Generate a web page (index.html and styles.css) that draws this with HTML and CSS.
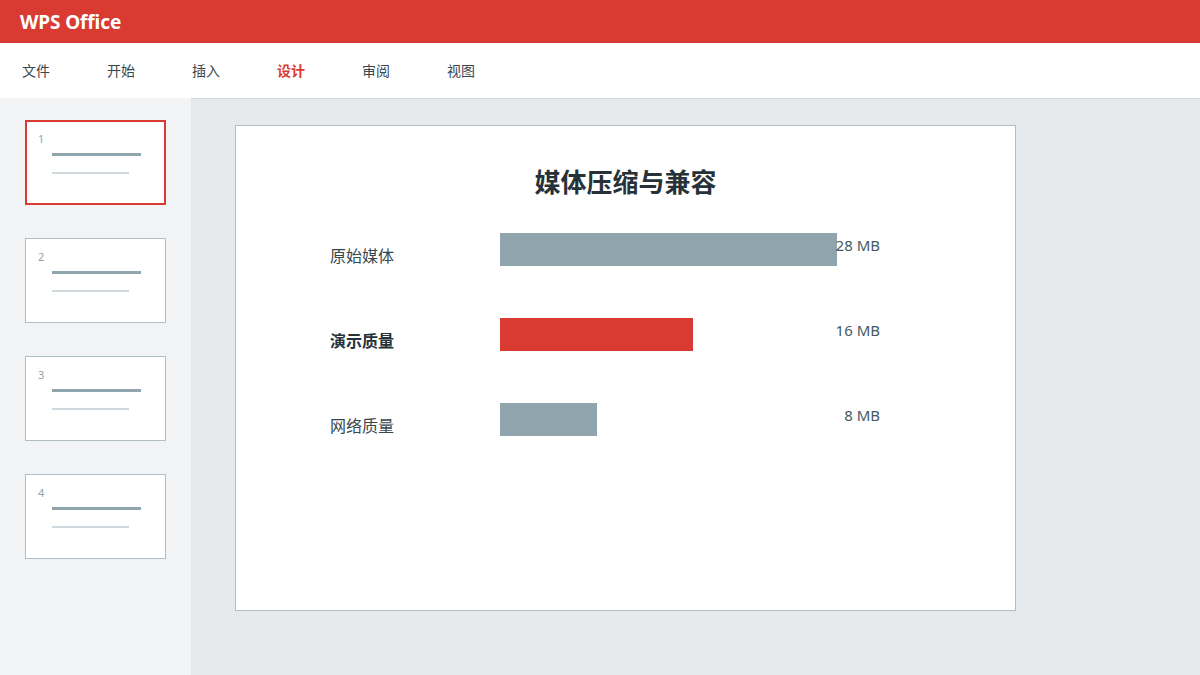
FILE: index.html
```html
<!DOCTYPE html>
<html lang="zh-CN">

<head>
      <meta charset="UTF-8">
      <meta name="viewport" content="width=device-width, initial-scale=1.0">
      <title>WPS Office</title>
      <link rel="stylesheet" href="styles.css">
</head>

<body>
      <div class="app">
            <!-- title bar -->
            <header class="titlebar">
                  <h1 class="brand">WPS Office</h1>
            </header>

            <!-- ribbon tabs -->
            <nav class="tabs">
                  <span class="tab">文件</span>
                  <span class="tab">开始</span>
                  <span class="tab">插入</span>
                  <span class="tab active">设计</span>
                  <span class="tab">审阅</span>
                  <span class="tab">视图</span>
            </nav>

            <div class="workspace">
                  <!-- slide thumbnails -->
                  <aside class="sidebar">
                        <div class="thumb selected">
                              <span class="thumb-num">1</span>
                              <div class="thumb-line"></div>
                              <div class="thumb-line light"></div>
                        </div>
                        <div class="thumb">
                              <span class="thumb-num">2</span>
                              <div class="thumb-line"></div>
                              <div class="thumb-line light"></div>
                        </div>
                        <div class="thumb">
                              <span class="thumb-num">3</span>
                              <div class="thumb-line"></div>
                              <div class="thumb-line light"></div>
                        </div>
                        <div class="thumb">
                              <span class="thumb-num">4</span>
                              <div class="thumb-line"></div>
                              <div class="thumb-line light"></div>
                        </div>
                  </aside>

                  <!-- slide canvas -->
                  <main class="stage">
                        <section class="slide">
                              <h2 class="slide-title">媒体压缩与兼容</h2>

                              <div class="chart">
                                    <div class="chart-row">
                                          <span class="row-label">原始媒体</span>
                                          <div class="bar" style="width: 337px"></div>
                                          <span class="row-value">28 MB</span>
                                    </div>
                                    <div class="chart-row">
                                          <span class="row-label strong">演示质量</span>
                                          <div class="bar accent" style="width: 193px"></div>
                                          <span class="row-value">16 MB</span>
                                    </div>
                                    <div class="chart-row">
                                          <span class="row-label">网络质量</span>
                                          <div class="bar" style="width: 97px"></div>
                                          <span class="row-value">8 MB</span>
                                    </div>
                              </div>
                        </section>
                  </main>
            </div>
      </div>
</body>

</html>
```

FILE: styles.css
```css
* {
      padding: 0;
      margin: 0;
      box-sizing: border-box;
      font-family: "Noto Sans", "Noto Sans CJK SC", "Open Sans", sans-serif;
}

body {
      width: 1200px;
      height: 675px;
      overflow: hidden;
      background-color: #e6eaed;
}

.app {
      display: flex;
      flex-direction: column;
      height: 675px;
}

/* --- title bar --- */
.titlebar {
      height: 43px;
      background-color: #d93a31;
      display: flex;
      align-items: center;
      padding-left: 20px;
}

.brand {
      color: #ffffff;
      font-size: 19px;
      font-weight: 700;
      letter-spacing: -0.1px;
}

/* --- tabs --- */
.tabs {
      height: 55px;
      background-color: #ffffff;
      display: flex;
      align-items: center;
      padding-left: 22px;
      padding-bottom: 2px;
      gap: 57px;
}

.tab {
      font-size: 14px;
      color: #37474f;
      width: 28px;
      white-space: nowrap;
}

.tab.active {
      color: #d93a31;
      font-weight: 700;
}

/* --- workspace --- */
.workspace {
      flex: 1;
      display: flex;
}

.sidebar {
      width: 191px;
      background-color: #f1f3f5;
      padding: 22px 0 0 25px;
      display: flex;
      flex-direction: column;
      gap: 33px;
}

.thumb {
      width: 141px;
      height: 85px;
      background-color: #ffffff;
      border: 1px solid #b0bec5;
      padding: 11px 0 0 12px;
}

.thumb.selected {
      border: 2px solid #d93a31;
      padding: 10px 0 0 11px;
}

.thumb-num {
      display: block;
      font-size: 11px;
      line-height: 14px;
      color: #90a4ae;
}

.thumb-line {
      margin-left: 14px;
      margin-top: 7px;
      width: 89px;
      height: 3px;
      background-color: #90a4ae;
}

.thumb-line.light {
      margin-top: 16px;
      width: 77px;
      height: 2px;
      background-color: #cfd8dc;
}

.stage {
      flex: 1;
      border-top: 1px solid #cfd8dc;
      padding: 26px 0 0 44px;
}

/* --- slide --- */
.slide {
      width: 781px;
      height: 486px;
      background-color: #ffffff;
      border: 1px solid #b0bec5;
      padding: 38px 0 0 94px;
}

.slide-title {
      font-size: 26px;
      line-height: 36px;
      font-weight: 700;
      color: #263238;
      text-align: center;
      padding-right: 94px;
      margin-bottom: 33px;
}

.chart {
      display: flex;
      flex-direction: column;
      gap: 52px;
}

.chart-row {
      display: grid;
      grid-template-columns: 170px 380px;
      height: 33px;
}

.row-label {
      grid-column: 1;
      grid-row: 1;
      font-size: 16px;
      line-height: 22px;
      margin-top: 12px;
      color: #37474f;
}

.row-label.strong {
      font-weight: 700;
      color: #263238;
}

.bar {
      grid-column: 2;
      grid-row: 1;
      height: 33px;
      background-color: #90a4ae;
}

.bar.accent {
      background-color: #d93a31;
}

.row-value {
      grid-column: 2;
      grid-row: 1;
      justify-self: end;
      align-self: start;
      font-size: 15px;
      line-height: 22px;
      margin-top: 1px;
      color: #455a64;
}
```
